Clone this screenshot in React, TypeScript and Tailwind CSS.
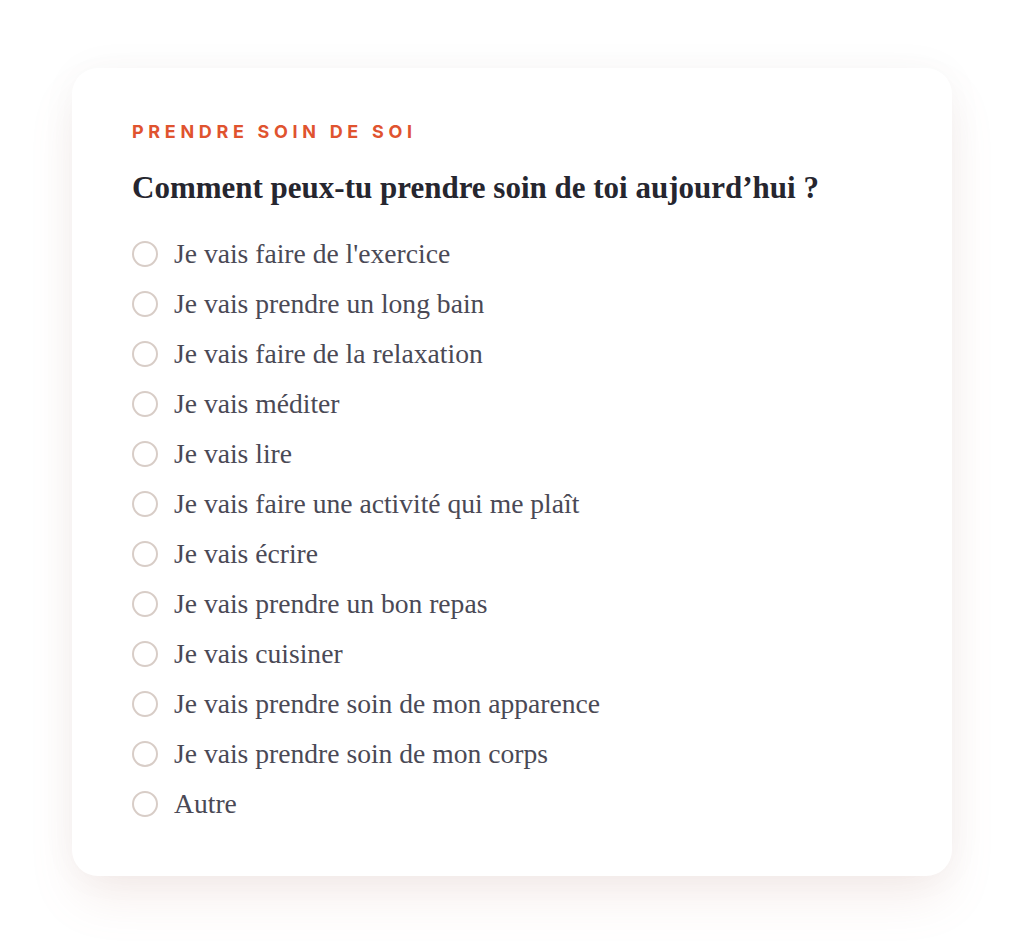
import React from "react";

const options = [
  "Je vais faire de l'exercice",
  "Je vais prendre un long bain",
  "Je vais faire de la relaxation",
  "Je vais méditer",
  "Je vais lire",
  "Je vais faire une activité qui me plaît",
  "Je vais écrire",
  "Je vais prendre un bon repas",
  "Je vais cuisiner",
  "Je vais prendre soin de mon apparence",
  "Je vais prendre soin de mon corps",
  "Autre",
];

export default function App() {
  return (
    <div className="min-h-[944px] bg-white px-[72px] py-[68px]">
      <div className="rounded-[26px] bg-white px-[60px] pt-[52px] pb-[47px] shadow-[0_26px_50px_-6px_rgba(190,130,110,0.14),0_0_40px_rgba(0,0,0,0.035)]">
        <div className="text-[18px] leading-[24px] font-bold tracking-[0.26em] text-[#e0532f] [font-family:Inter,'Liberation_Sans',sans-serif]">
          PRENDRE SOIN DE SOI
        </div>
        <h1 className="mt-[26px] text-[31px] leading-[36px] font-bold text-[#26262f] [font-family:'Liberation_Serif',serif]">
          Comment peux-tu prendre soin de toi aujourd’hui ?
        </h1>
        <div className="mt-[23px] flex flex-col">
          {options.map((o) => (
            <label key={o} className="flex h-[50px] items-center gap-[16px]">
              <span className="h-[26px] w-[26px] shrink-0 rounded-full border-2 border-[#d8cdc7] bg-white" />
              <span className="text-[27.6px] leading-[30px] text-[#4a4955] [font-family:'Liberation_Serif',serif]">
                {o}
              </span>
            </label>
          ))}
        </div>
      </div>
    </div>
  );
}
